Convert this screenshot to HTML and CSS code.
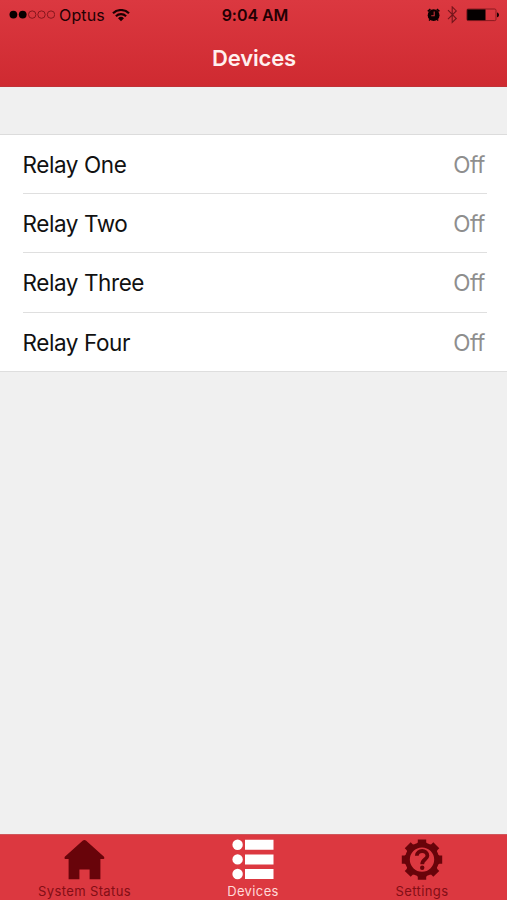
FILE: index.html
```html
<!DOCTYPE html>
<html lang="en">
<head>
<meta charset="utf-8">
<title>Devices</title>
<link rel="stylesheet" href="styles.css">
</head>
<body>
<header class="header">
  <div class="status">
    <div class="status-left">
      <svg class="signal" width="46" height="10" viewBox="0 0 46 10"><g fill="#080000"><circle cx="4.4" cy="4.6" r="3.9"/><circle cx="13.7" cy="4.6" r="3.9"/></g><g fill="none" stroke="#86171d" stroke-width="1"><circle cx="23.2" cy="4.6" r="3.7"/><circle cx="32.5" cy="4.6" r="3.7"/><circle cx="42" cy="4.6" r="3.7"/></g></svg>
      <span class="carrier">Optus</span>
      <svg class="wifi" width="18" height="13" viewBox="0 0 18 13"><g fill="none" stroke="#1a0002" stroke-width="2.1"><path d="M1 4.3a11.3 11.3 0 0 1 16 0"/><path d="M3.9 7.2a7.2 7.2 0 0 1 10.2 0"/></g><path fill="#1a0002" d="M6 9.2a4.3 4.3 0 0 1 6 0L9 12.2z"/></svg>
    </div>
    <span class="time">9:04 AM</span>
    <div class="status-right">
      <svg class="alarm" width="14" height="14" viewBox="0 0 14 14"><circle cx="6.6" cy="7.2" r="5.9" fill="#0b0001"/><path d="M.8 3.4 3.4 1.2M12.4 3.4 9.8 1.2" stroke="#0b0001" stroke-width="1.6"/><path d="M3 11.6l-1 1M10.2 11.6l1 1" stroke="#0b0001" stroke-width="1.4"/><path d="M7.2 3.6v4.2H4.2" fill="none" stroke="#c52f36" stroke-width="1.1"/></svg>
      <svg class="bluetooth" width="11" height="18" viewBox="0 0 11 18"><path d="M1 4.2l8.3 8.3-4.1 4V.9l4.1 4L1 13.2" fill="none" stroke="#74151b" stroke-width="1.1"/></svg>
      <svg class="battery" width="34" height="14" viewBox="0 0 34 14"><rect x=".8" y="1" width="29.2" height="11.6" rx="1.3" fill="none" stroke="#8b1a20"/><path d="M1.2 1.4H19.5V12.2H1.2z" fill="#050000"/><path d="M31 4.4c2.7.5 2.7 4.3 0 4.8z" fill="#1a0002"/></svg>
    </div>
  </div>
  <h1 class="title">Devices</h1>
</header>
<main class="content">
  <ul class="list">
    <li class="row"><span class="name">Relay One</span><span class="state">Off</span></li>
    <li class="row"><span class="name">Relay Two</span><span class="state">Off</span></li>
    <li class="row"><span class="name">Relay Three</span><span class="state">Off</span></li>
    <li class="row"><span class="name">Relay Four</span><span class="state">Off</span></li>
  </ul>
</main>
<nav class="tabs">
  <a class="tab">
    <svg class="icon" width="42" height="42" viewBox="0 0 42 42"><path fill="#68040a" d="M21.4.9q.9 0 1.8.8L41 17.8q1 1.7-.4 2.2H37.4V40.2H26.6V30.4H16.4V40.2H5.6V20H2.2Q.8 19.5 1.8 17.8L19.6 1.7q.9-.8 1.8-.8z"/></svg>
    <span class="label system">System Status</span>
  </a>
  <a class="tab active">
    <svg class="icon" width="42" height="42" viewBox="0 0 42 42"><g fill="#fff"><circle cx="5.6" cy="5.7" r="5.2"/><circle cx="5.6" cy="20.4" r="5.2"/><circle cx="5.6" cy="35" r="5.2"/><path d="M13 .7h28.5v10H13zM13 15.4h28.5v10H13zM13 30h28.5v10H13z"/></g></svg>
    <span class="label">Devices</span>
  </a>
  <a class="tab">
    <svg class="icon" width="42" height="42" viewBox="-21 -20.6 42 42"><defs><path id="tooth" d="M-6.2-14-4.2-17.4V-20.2H4.2V-17.4L6.2-14z"/></defs><g fill="#68040a"><use href="#tooth"/><use href="#tooth" transform="rotate(45)"/><use href="#tooth" transform="rotate(90)"/><use href="#tooth" transform="rotate(135)"/><use href="#tooth" transform="rotate(180)"/><use href="#tooth" transform="rotate(225)"/><use href="#tooth" transform="rotate(270)"/><use href="#tooth" transform="rotate(315)"/></g><circle r="14.6" fill="none" stroke="#68040a" stroke-width="4.8"/><path d="M-5.2-3.8C-5-10.2 5.4-10.2 5.4-3.8 5.4-.2.2-.2.2 4.6" fill="none" stroke="#68040a" stroke-width="3.8"/><circle cx=".2" cy="8.2" r="2.2" fill="#68040a"/></svg>
    <span class="label settings">Settings</span>
  </a>
</nav>
</body>
</html>
```
FILE: styles.css
```css
* { box-sizing: border-box; }

body {
  margin: 0;
  width: 507px;
  height: 900px;
  display: flex;
  flex-direction: column;
  overflow: hidden;
  background: #f0f0f0;
  font-family: Inter, "Liberation Sans", sans-serif;
}

svg { display: block; flex: none; }

.header {
  height: 87px;
  background: linear-gradient(#db3840, #cf2a31);
  border-bottom: 1px solid #c03238;
}

.status {
  height: 30px;
  padding: 0 7px 0 9px;
  display: grid;
  grid-template-columns: 1fr auto 1fr;
  align-items: center;
  color: #220003;
  font-size: 16px;
  line-height: 30px;
}

.status-left, .status-right { display: flex; align-items: center; }
.status-right { justify-content: flex-end; }
.carrier { margin-left: 4px; letter-spacing: 0.15px; }
.wifi { margin-left: 7px; }
.time { padding-left: 1px; font-weight: 600; letter-spacing: -0.05px; }
.bluetooth { margin-left: 6px; }
.battery { margin-left: 8px; }

.title {
  margin: 12px 0 0;
  padding-left: 1px;
  text-align: center;
  color: #fff0ef;
  font-size: 22px;
  font-weight: 600;
  line-height: 32px;
  letter-spacing: -0.15px;
}

.content { flex: 1; padding-top: 47px; }

.list {
  margin: 0;
  padding: 0 20.5px 0 22.5px;
  list-style: none;
  background: #fff;
  border-top: 1px solid #dcdcdc;
  border-bottom: 1px solid #dedede;
}

.row {
  height: 59.2px;
  padding: 2px 1.5px 0 0;
  display: flex;
  justify-content: space-between;
  align-items: center;
  font-size: 22.5px;
  line-height: 30px;
  letter-spacing: -0.42px;
  border-bottom: 1px solid #dfdfdf;
}

.row:last-child { height: 58px; border-bottom: 0; }
.name { color: #111; }
.state { color: #8e8e8e; }

.tabs {
  height: 66px;
  display: grid;
  grid-template-columns: repeat(3, 1fr);
  background: #dc3840;
  border-top: 1px solid #cf575c;
}

.tab {
  padding: 4px 1px 0 0;
  display: flex;
  flex-direction: column;
  align-items: center;
  color: #830e16;
}

.active { color: #ffd9d8; }

.label {
  font-size: 13px;
  line-height: 16px;
  margin-top: 2px;
  letter-spacing: 0.38px;
  white-space: nowrap;
}

.system { padding-left: 1px; }
```
